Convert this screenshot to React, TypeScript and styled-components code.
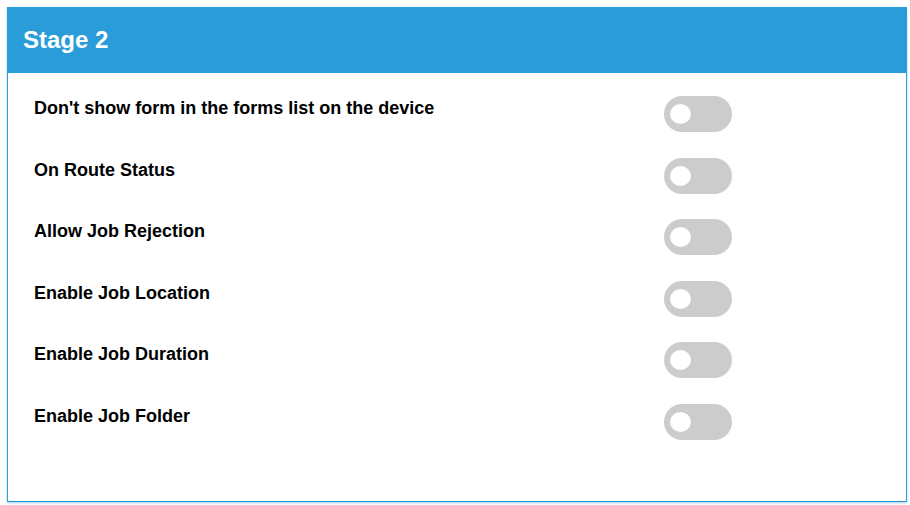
import React, { useState } from 'react'
import styled, { createGlobalStyle } from 'styled-components'

const GlobalStyle = createGlobalStyle`
  html, body {
    margin: 0;
    padding: 0;
    background: #ffffff;
    font-family: "Liberation Sans", Arial, sans-serif;
  }
  body {
    padding: 7px;
  }
`

const Panel = styled.section`
  width: 900px;
  height: 495px;
  box-sizing: border-box;
  border: 1px solid #299cd9;
  border-top: none;
  background: #ffffff;
  box-shadow: 0 1px 2px rgba(41, 156, 217, 0.45);
  display: flex;
  flex-direction: column;
`

const Header = styled.header`
  height: 66px;
  margin: 0 -1px;
  background: #299cd9;
  display: flex;
  align-items: center;
  padding: 0 16px;
`

const Title = styled.h2`
  margin: 0;
  font-size: 24px;
  font-weight: 700;
  color: #ffffff;
  line-height: 28px;
`

const List = styled.div`
  display: flex;
  flex-direction: column;
  gap: 25.6px;
  padding: 23px 0 0 26px;
`

const Row = styled.div`
  display: flex;
  align-items: flex-start;
  height: 36px;
`

const Label = styled.span`
  width: 630px;
  margin-top: 2px;
  font-size: 18px;
  line-height: 20px;
  font-weight: 700;
  color: #000000;
`

const Track = styled.button<{ $on: boolean }>`
  position: relative;
  width: 68px;
  height: 36px;
  padding: 0;
  border: none;
  border-radius: 18px;
  background: ${({ $on }) => ($on ? '#299cd9' : '#cccccc')};
  cursor: pointer;
  transition: background 0.2s;
`

const Knob = styled.span<{ $on: boolean }>`
  position: absolute;
  top: 8px;
  left: ${({ $on }) => ($on ? '41px' : '6px')};
  width: 21px;
  height: 20px;
  border-radius: 50%;
  background: #ffffff;
  transition: left 0.2s;
`

const settings = [
  "Don't show form in the forms list on the device",
  'On Route Status',
  'Allow Job Rejection',
  'Enable Job Location',
  'Enable Job Duration',
  'Enable Job Folder',
]

const Toggle: React.FC<{ on: boolean; onChange: () => void }> = ({ on, onChange }) => (
  <Track $on={on} onClick={onChange} aria-pressed={on}>
    <Knob $on={on} />
  </Track>
)

const App: React.FC = () => {
  const [values, setValues] = useState<boolean[]>(settings.map(() => false))

  const flip = (i: number) =>
    setValues(v => v.map((x, j) => (j === i ? !x : x)))

  return (
    <>
      <GlobalStyle />
      <Panel>
        <Header>
          <Title>Stage 2</Title>
        </Header>
        <List>
          {settings.map((label, i) => (
            <Row key={label}>
              <Label>{label}</Label>
              <Toggle on={values[i]} onChange={() => flip(i)} />
            </Row>
          ))}
        </List>
      </Panel>
    </>
  )
}

export default App
